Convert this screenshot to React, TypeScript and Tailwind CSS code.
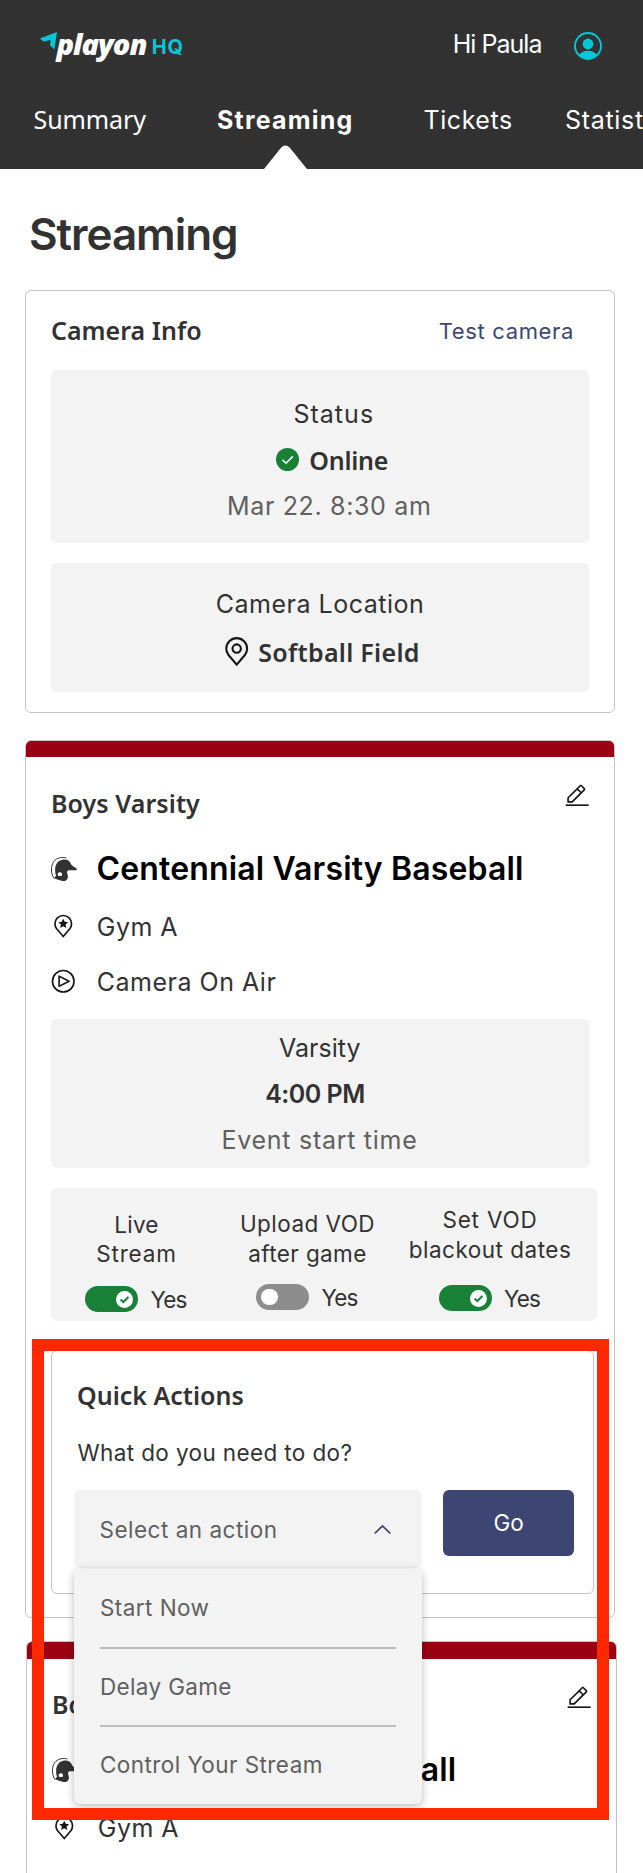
import React from "react";

const inter = "font-['Inter','Liberation_Sans',sans-serif]";
const noto = "font-['Noto_Sans','Open_Sans',sans-serif]";

function Logo() {
  return (
    <svg width="152" height="44" viewBox="36 24 152 44" className="block">
      <path d="M39.9 38.4 57 32 54.3 49.4 50 45.2 50.7 39.8 43.9 41.7Z" fill="#00c9d7" />
      <text
        x="56.5"
        y="54.6"
        fill="#ffffff"
        fontFamily="Noto Sans"
        fontStyle="italic"
        fontWeight="900"
        fontSize="29"
        textLength="91"
        lengthAdjust="spacing"
      >
        playon
      </text>
      <text x="151.8" y="54.3" fill="#00c9d7" fontFamily="Inter" fontWeight="700" fontSize="20" letterSpacing="0.7">
        HQ
      </text>
    </svg>
  );
}

function Avatar() {
  return (
    <svg width="28" height="28" viewBox="0 0 28 28" className="block">
      <clipPath id="avatar-clip">
        <circle cx="14" cy="14" r="13.2" />
      </clipPath>
      <circle cx="14" cy="14" r="13" fill="none" stroke="#00c9d7" strokeWidth="1.9" />
      <circle cx="14" cy="12" r="5.4" fill="#00c9d7" />
      <ellipse cx="14" cy="27" rx="10.5" ry="8.2" fill="#00c9d7" clipPath="url(#avatar-clip)" />
    </svg>
  );
}

function EditIcon() {
  return (
    <svg width="26.3" height="26.3" viewBox="0 0 32 32" fill="#161616" className="block shrink-0">
      <path d="M2 26h28v2H2z" />
      <path d="M25.4,9c0.8-0.8,0.8-2,0-2.8l-3.6-3.6c-0.8-0.8-2-0.8-2.8,0L4,17.6V24h6.4L25.4,9z M20.4,4L24,7.6l-3,3L17.4,7L20.4,4z M6,22v-3.6l10-10l3.6,3.6l-10,10H6z" />
    </svg>
  );
}

const pinOutline =
  "M16,30,7.5645,20.0513c-.0479-.0571-.3482-.4515-.3482-.4515A10.8888,10.8888,0,0,1,5,13a11,11,0,0,1,22,0,10.8844,10.8844,0,0,1-2.2148,6.5973l-.0015.0025s-.3.3944-.3447.4474ZM8.8125,18.395c.001.0007.2334.3082.2866.3744L16,26.9079l6.91-8.15c.0439-.0552.2783-.3649.2788-.3657A8.901,8.901,0,0,0,25,13,9,9,0,1,0,7,13a8.9054,8.9054,0,0,0,1.8125,5.395Z";

function PinIcon() {
  return (
    <svg width="33.4" height="33.4" viewBox="0 0 32 32" fill="#161616" className="block shrink-0">
      <path d="M16,18a5,5,0,1,1,5-5A5.0057,5.0057,0,0,1,16,18Zm0-8a3,3,0,1,0,3,3A3.0033,3.0033,0,0,0,16,10Z" />
      <path d={pinOutline} />
    </svg>
  );
}

function PinStarIcon() {
  return (
    <svg width="26.5" height="26.5" viewBox="0 0 32 32" fill="#161616" className="block shrink-0">
      <path d="M16 6.8 17.8 10.7 22 11.1 18.8 13.9 19.7 18 16 15.9 12.3 18 13.2 13.9 10 11.1 14.2 10.7Z" />
      <path d={pinOutline} />
    </svg>
  );
}

function PlayIcon() {
  return (
    <svg width="26.5" height="26.5" viewBox="0 0 32 32" fill="#161616" className="block shrink-0">
      <path d="M11,23a1,1,0,0,1-1-1V10a1,1,0,0,1,1.4473-.8945l12,6a1,1,0,0,1,0,1.789l-12,6A1.001,1.001,0,0,1,11,23Zm1-11.3821v8.7642L20.7642,16Z" />
      <path d="M16,4A12,12,0,1,1,4,16,12,12,0,0,1,16,4m0-2A14,14,0,1,0,30,16,14,14,0,0,0,16,2Z" />
    </svg>
  );
}

function HelmetIcon() {
  return (
    <svg width="26" height="24" viewBox="0 0 78 72" className="block shrink-0">
      <path d="M9 64C-1 50-1 27 8 14 17 2 34-1 46 3" fill="none" stroke="#323232" strokeWidth="3" />
      <path
        d="M24 12C38 3 57 7 61 23C67 28 73 31 77 35C78 38 77 40 74 40H54C48 41 47 45 49 50C53 60 50 69 42 72C34 73 26 71 9 64L15 56C10 40 11 22 24 12Z"
        fill="#323232"
      />
      <path d="M20 50C24 44 32 45 33 51C34 56 30 59 27 56C24 59 19 56 20 50Z" fill="#ffffff" />
    </svg>
  );
}

function CheckCircle() {
  return (
    <svg width="23" height="23" viewBox="0 0 23 23" className="block shrink-0">
      <circle cx="11.5" cy="11.5" r="11.5" fill="#198038" />
      <path d="M6.6 11.9 10 15.2 16.8 8.4" fill="none" stroke="#ffffff" strokeWidth="1.6" />
    </svg>
  );
}

function Toggle({ on }: { on: boolean }) {
  return on ? (
    <span className="flex h-[26.5px] w-[53px] items-center justify-end rounded-full bg-[#198038] pr-[5px]">
      <svg width="17" height="17" viewBox="0 0 17 17" className="block">
        <circle cx="8.5" cy="8.5" r="8.5" fill="#ffffff" />
        <path d="M4.6 8.4 7.4 11 12.4 6" fill="none" stroke="#198038" strokeWidth="2" />
      </svg>
    </span>
  ) : (
    <span className="flex h-[26.5px] w-[53px] items-center rounded-full bg-[#8d8d8d] pl-[5px]">
      <span className="size-[16.5px] rounded-full bg-white" />
    </span>
  );
}

function Setting({ className, gap, lines, on }: { className: string; gap: string; lines: [React.ReactNode, React.ReactNode]; on: boolean }) {
  return (
    <div className={`flex flex-col items-center text-[22.5px] leading-[29.5px] ${className}`}>
      {lines[0]}
      {lines[1]}
      <div className={`flex items-center gap-[12.5px] pr-[1.5px] ${gap}`}>
        <Toggle on={on} />
        <span className="pt-px text-[22.5px] leading-[26px] tracking-[-0.9px]">Yes</span>
      </div>
    </div>
  );
}

function EventHeader({ title, titleClass }: { title: string; titleClass: string }) {
  return (
    <>
      <div className="h-[16.5px] rounded-t-[5px] bg-[#9b0012]" />
      <div className="flex h-[92px] items-center justify-between pl-[25px] pr-[23.3px]">
        <h2 className={`${noto} pt-px text-[25px] font-semibold tracking-[0.08px]`}>Boys Varsity</h2>
        <div className="-mt-[13px]">
          <EditIcon />
        </div>
      </div>
      <div className="flex h-[39px] items-center gap-[20px] pl-[24.5px]">
        <HelmetIcon />
        <h3 className={`whitespace-nowrap text-[32px] font-semibold text-black ${titleClass}`}>{title}</h3>
      </div>
      <div className="mt-[11px] flex h-[55px] items-center gap-[20px] pl-[24.3px]">
        <PinStarIcon />
        <span className="pt-[1.5px] text-[25px] tracking-[0.47px]">Gym A</span>
      </div>
    </>
  );
}

export default function App() {
  return (
    <div className={`relative h-[1873px] w-[643px] overflow-hidden bg-white text-[#323232] ${inter}`}>
      <header className="relative h-[169px] overflow-hidden bg-[#323232] text-white">
        <div className="flex h-[92px] items-center justify-between pl-[36px] pr-[41px]">
          <Logo />
          <div className="flex items-center gap-[32.5px]">
            <span className="-mt-[3px] text-[25px] tracking-[-0.97px]">Hi Paula</span>
            <Avatar />
          </div>
        </div>
        <nav className="flex h-[55px] items-center whitespace-nowrap pl-[33.5px] pt-px text-[25px]">
          <a className={`w-[183.5px] shrink-0 tracking-[-0.1px] ${noto}`}>Summary</a>
          <a className="w-[206.5px] shrink-0 pt-px font-bold tracking-[1.2px]">Streaming</a>
          <a className="w-[141.5px] shrink-0 pt-px tracking-[0.56px]">Tickets</a>
          <a className="shrink-0 pt-px tracking-[0.7px]">Statistics</a>
        </nav>
        <svg width="43" height="24" viewBox="0 0 43 24" className="absolute bottom-0 left-[264px]">
          <path d="M0 24 17 2.8Q21.3-2 25.8 2.8L43 24Z" fill="#ffffff" />
        </svg>
      </header>

      <main>
        <h1 className="ml-[29px] mt-[35px] h-[60px] text-[44px] font-semibold leading-[60px] tracking-[-1.05px]">Streaming</h1>

        <section className="ml-[25px] mt-[25.5px] h-[423.5px] w-[590px] rounded-[6px] border border-[#c4c4c4] pl-[25px] pr-[25px]">
          <div className="flex h-[79px] items-center justify-between pr-[15px] pt-[2px]">
            <h2 className={`${noto} text-[25px] font-semibold`}>Camera Info</h2>
            <a className="text-[22px] tracking-[0.65px] text-[#3d4672]">Test camera</a>
          </div>
          <div className="flex h-[173px] flex-col rounded-[6px] bg-[#f3f3f3] pt-[21px] text-center text-[25px] leading-[46px]">
            <div className="pl-[27.5px] tracking-[1.03px]">Status</div>
            <div className="flex items-center justify-center gap-[10px] pl-[24.5px]">
              <CheckCircle />
              <span className={`${noto} font-semibold tracking-[-0.25px]`}>Online</span>
            </div>
            <div className="pl-[18.5px] tracking-[0.65px] text-[#606060]">Mar 22. 8:30 am</div>
          </div>
          <div className="mt-[20px] h-[129px] rounded-[6px] bg-[#f3f3f3] pt-[17.5px] text-center text-[25px] leading-[48px]">
            <div className="tracking-[0.52px]">Camera Location</div>
            <div className="flex items-center justify-center gap-[4.5px]">
              <PinIcon />
              <span className={`${noto} font-semibold tracking-[0.3px]`}>Softball Field</span>
            </div>
          </div>
        </section>

        <section className="ml-[25px] mt-[26.5px] h-[878px] w-[590px] rounded-[6px] border border-[#c4c4c4]">
          <EventHeader title="Centennial Varsity Baseball" titleClass="tracking-[0.15px]" />
          <div className="flex h-[55px] items-center gap-[20px] pl-[24.3px]">
            <PlayIcon />
            <span className="pt-[1.5px] text-[25px] tracking-[0.5px]">Camera On Air</span>
          </div>

          <div className="ml-[25px] mt-[10px] h-[148.5px] w-[539px] rounded-[6px] bg-[#f3f3f3] pt-[6px] text-center text-[25px] leading-[46px]">
            <div className="pr-[1.5px]">Varsity</div>
            <div className="pr-[11px] font-semibold tracking-[-0.5px]">4:00 PM</div>
            <div className="pr-[2px] tracking-[0.72px] text-[#606060]">Event start time</div>
          </div>

          <div className="ml-[25px] mt-[20px] flex h-[133.5px] w-[546px] rounded-[6px] bg-[#f3f3f3]">
            <Setting
              className="w-[171px] pt-[22px]"
              gap="mt-[17px]"
              on
              lines={[<span className="tracking-[0.2px]">Live</span>, <span className="tracking-[0.8px]">Stream</span>]}
            />
            <Setting
              className="w-[171px] pt-[21.5px]"
              gap="mt-[15.5px]"
              on={false}
              lines={[<span className="tracking-[0.45px]">Upload VOD</span>, <span className="tracking-[0.4px]">after game</span>]}
            />
            <Setting
              className="w-[194px] pt-[17.5px]"
              gap="mt-[20.5px]"
              on
              lines={[<span className="tracking-[0.8px]">Set VOD</span>, <span className="tracking-[0.5px]">blackout dates</span>]}
            />
          </div>

          <div className="ml-[25px] mt-[29px] h-[243.5px] w-[543px] rounded-[6px] border border-[#c4c4c4] pl-[22px] pt-[21px]">
            <h3 className={`${noto} ml-[3px] h-[46px] text-[25px] font-semibold leading-[46px]`}>Quick Actions</h3>
            <p className="ml-[3.5px] h-[69px] text-[22.5px] leading-[69px] tracking-[0.38px]">What do you need to do?</p>
            <div className="mt-[3px] flex items-start gap-[21px]">
              <div className="relative w-[348px] text-[22.5px] text-[#606060]">
                <div className="flex h-[78px] items-center justify-between rounded-[6px] bg-[#f3f3f3] pl-[25.5px] pr-[31px] pt-px">
                  <span className="tracking-[0.5px]">Select an action</span>
                  <svg width="17" height="9" viewBox="0 0 17 9" className="block">
                    <path d="M.8 8.3 8.5.9 16.2 8.3" fill="none" stroke="#3d4672" strokeWidth="1.7" />
                  </svg>
                </div>
                <ul className="absolute left-0 top-[78.5px] z-10 h-[235px] w-[348px] rounded-[6px] bg-[#f3f3f3] px-[26px] shadow-[0_2px_8px_rgba(0,0,0,0.28)]">
                  <li className="flex h-[80px] items-center border-b-2 border-[#bdbdbd] pt-px tracking-[0.43px]">Start Now</li>
                  <li className="flex h-[78.5px] items-center border-b-2 border-[#bdbdbd] tracking-[0.35px]">Delay Game</li>
                  <li className="flex h-[76px] items-center tracking-[0.43px]">Control Your Stream</li>
                </ul>
              </div>
              <button className="h-[66px] w-[131px] rounded-[6px] bg-[#3d4672] text-[22.5px] tracking-[-0.2px] text-white">Go</button>
            </div>
          </div>
        </section>

        <section className="ml-[26px] mt-[23.5px] h-[300px] w-[591px] rounded-[6px] border border-[#c4c4c4]">
          <EventHeader title="Centennial JV Baseball" titleClass="tracking-[0.15px]" />
        </section>
      </main>

      <div className="pointer-events-none absolute left-[32px] top-[1338.5px] z-20 h-[481.5px] w-[576.5px] border-[12px] border-[#ff2800]" />
    </div>
  );
}
